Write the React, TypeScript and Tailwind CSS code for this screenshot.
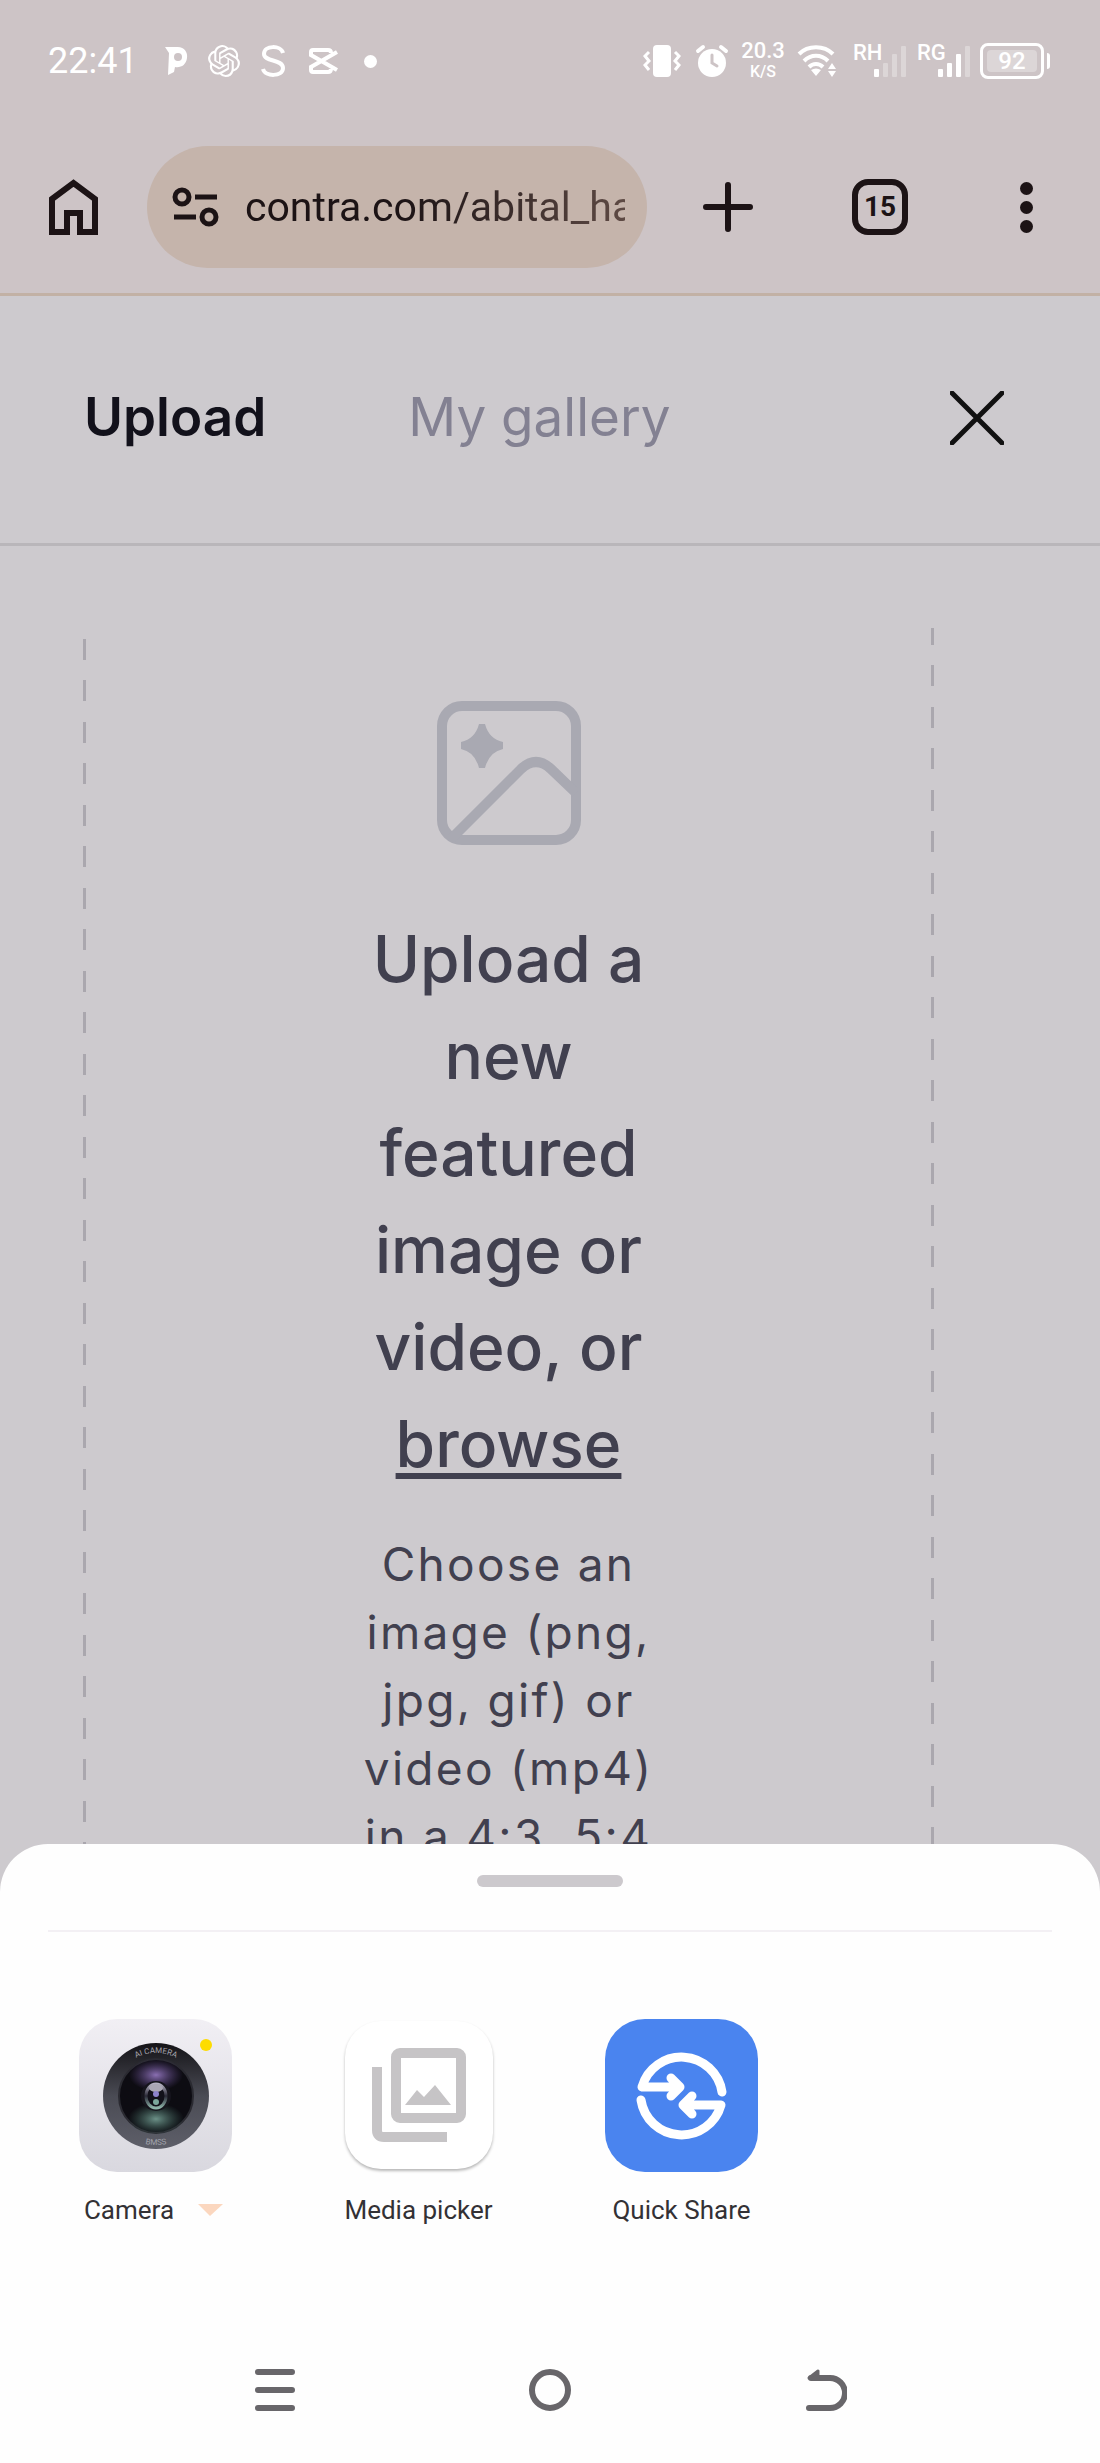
import type { ReactNode } from "react";
import { SiOpenai } from "react-icons/si";

const DASHES =
  "w-[3px] bg-[repeating-linear-gradient(to_bottom,#aaa7ae_0,#aaa7ae_21px,transparent_21px,transparent_41px,#aaa7ae_41px,#aaa7ae_62px,transparent_62px,transparent_83px)]";

function SignalBars({ label, on, className }: { label: string; on: number; className: string }) {
  return (
    <div className={`relative h-8 w-14 ${className}`}>
      <span className="absolute left-0 top-0 text-[22px] leading-4 font-medium">{label}</span>
      <svg viewBox="0 0 56 32" className="h-8 w-14" fill="#fff">
        <rect x="21" y="24" width="5" height="8" rx="1" />
        <rect x="30" y="18" width="5" height="14" rx="1" opacity={on > 1 ? 1 : 0.3} />
        <rect x="39" y="9" width="5" height="23" rx="1" opacity={on > 2 ? 1 : 0.3} />
        <rect x="48" y="1" width="5" height="31" rx="1" opacity="0.3" />
      </svg>
    </div>
  );
}

function StatusBar() {
  return (
    <div className="flex h-[122px] items-center pl-12 pr-[50px] text-white">
      <span className="w-[116px] text-[36px] leading-10">22:41</span>
      <svg viewBox="0 0 24 30" className="mr-5 h-[30px] w-6" aria-label="Payments">
        <path d="M1 1 L12 1 C20 0 24 6 23 12 C22 19 17 22 11 21 L10 26 L4 29 L5 7 Z" fill="#fff" />
        <circle cx="14" cy="11" r="4" fill="#cdc4c6" />
      </svg>
      <SiOpenai aria-label="Assistant" className="mr-5 size-8" />
      <svg viewBox="0 0 26 32" className="mr-5 h-8 w-[26px]" fill="none" stroke="#fff" strokeWidth="4" aria-label="S app">
        <path d="M23 8 C21 0 4 0 4 9 C4 17 23 14 23 23 C23 32 5 32 3 24" />
      </svg>
      <svg viewBox="0 0 32 28" className="mr-[26px] h-7 w-8" fill="none" stroke="#fff" strokeWidth="4" aria-label="Video editor">
        <path d="M31 5 L5 20 V23 Q5 25 7 25 H22 Q25 25 25 22 M31 23 L5 8 V5 Q5 3 7 3 H22 Q25 3 25 6" />
      </svg>
      <span className="size-[13px] rounded-full bg-white" />
      <div className="ml-auto flex items-center">
        <svg viewBox="0 0 38 32" className="mr-[14px] h-8 w-[38px]" aria-label="Vibrate">
          <rect x="10" y="0" width="18" height="32" rx="4" fill="#fff" />
          <path d="M6 7 L2 11 L6 16 L2 20 L6 25 M32 7 L36 11 L32 16 L36 20 L32 25" fill="none" stroke="#fff" strokeWidth="3" />
        </svg>
        <svg viewBox="0 0 34 34" className="mr-3 size-[34px]" fill="none" stroke="#fff" strokeLinecap="round" aria-label="Alarm">
          <circle cx="17" cy="19" r="14" fill="#fff" stroke="none" />
          <path d="M3 7 L8 3 M31 7 L26 3" strokeWidth="4" />
          <path d="M17 11 V19 L22 22" stroke="#cdc4c6" strokeWidth="3" />
        </svg>
        <div className="mr-3 w-11 text-center font-medium">
          <div className="text-[22px] leading-[22px]">20.3</div>
          <div className="text-base leading-5">K/S</div>
        </div>
        <svg viewBox="0 0 40 32" className="mr-4 h-8 w-10" fill="none" stroke="#fff" strokeWidth="4" aria-label="Wi-Fi">
          <path d="M2 9 C11 0 27 0 36 9 M7 16 C14 9 24 9 31 16 M12 22 C16 18 22 18 26 22" />
          <path d="M14 25 Q19 22 24 25 L19 31 Z M35 18 l4 6 h-8 z M35 32 l4 -6 h-8 z" fill="#fff" stroke="none" />
        </svg>
        <SignalBars label="RH" on={1} className="mr-2" />
        <SignalBars label="RG" on={3} className="mr-[7px]" />
        <div className="flex h-9 w-16 rounded-lg border-3 border-white p-1">
          <div className="flex flex-1 items-center justify-center rounded-sm bg-white/30 text-2xl leading-6 font-medium">92</div>
        </div>
        <span className="ml-[3px] h-4 w-[3px] rounded-r-sm bg-white" />
      </div>
    </div>
  );
}

function BrowserBar() {
  return (
    <div className="flex h-[171px] items-start pt-6 pl-12 text-[#1c1315]">
      <button type="button" aria-label="Home" className="mr-12 flex h-[122px] items-center">
        <svg viewBox="0 0 51 58" className="h-[58px] w-[51px]" fill="none" stroke="currentColor" strokeWidth="6">
          <path d="M4 21 L25.500 5 L47 21 V54 H32 V35 H19 V54 H4 Z" />
        </svg>
      </button>
      <div className="flex h-[122px] flex-1 items-center rounded-full bg-[#c5b4ab] pl-[25px] pr-[22px]">
        <svg viewBox="0 0 48 42" className="mr-[25px] h-[42px] w-12 shrink-0" fill="none" stroke="currentColor" strokeWidth="5" aria-label="Site settings">
          <circle cx="10" cy="11" r="7" />
          <circle cx="37" cy="31" r="7" />
          <path d="M23 11 H45 M2 31 H24" />
        </svg>
        <input
          aria-label="Address"
          readOnly
          value="contra.com/abital_ha"
          className="h-16 w-0 min-w-0 flex-1 bg-linear-to-r from-[#1c1315] from-40% to-[#5e4a44] bg-clip-text text-[41px] text-transparent outline-none"
        />
      </div>
      <div className="flex h-[122px] w-[453px] items-center pl-14">
        <button type="button" aria-label="New tab">
          <svg viewBox="0 0 50 50" className="size-[50px]" stroke="currentColor" strokeWidth="6" strokeLinecap="round">
            <path d="M25 3 V47 M3 25 H47" />
          </svg>
        </button>
        <button type="button" aria-label="Open tabs" className="ml-[99px] flex h-14 w-14 items-center justify-center rounded-2xl border-6 border-current text-[28px] font-bold">
          15
        </button>
        <button type="button" aria-label="Menu" className="ml-28 flex flex-col gap-[6px]">
          <span className="size-[13px] rounded-full bg-current" />
          <span className="size-[13px] rounded-full bg-current" />
          <span className="size-[13px] rounded-full bg-current" />
        </button>
      </div>
    </div>
  );
}

function CameraIcon() {
  return (
    <svg viewBox="0 0 153 153" className="size-[153px]">
      <defs>
        <linearGradient id="body" x1="0" y1="0" x2="0" y2="1">
          <stop offset="0" stopColor="#f1eff4" />
          <stop offset="1" stopColor="#d9d8df" />
        </linearGradient>
        <linearGradient id="ring" x1="0" y1="0" x2="0" y2="1">
          <stop offset="0" stopColor="#141317" />
          <stop offset="0.500" stopColor="#4a4b54" />
          <stop offset="1" stopColor="#5e5f69" />
        </linearGradient>
        <radialGradient id="violet">
          <stop offset="0" stopColor="#8a6fb2" />
          <stop offset="1" stopColor="#5c4585" stopOpacity="0" />
        </radialGradient>
        <radialGradient id="teal">
          <stop offset="0" stopColor="#6c9188" />
          <stop offset="1" stopColor="#3f665c" stopOpacity="0" />
        </radialGradient>
        <linearGradient id="inner" x1="0" y1="0" x2="0" y2="1">
          <stop offset="0" stopColor="#b5b2c2" />
          <stop offset="0.500" stopColor="#2a2937" />
          <stop offset="1" stopColor="#8fb5aa" />
        </linearGradient>
        <path id="top-arc" d="M34 77 A43 43 0 0 1 120 77" />
        <path id="low-arc" d="M28 77 A49 49 0 0 0 126 77" />
      </defs>
      <rect width="153" height="153" rx="38" fill="url(#body)" />
      <circle cx="77" cy="77" r="53" fill="url(#ring)" />
      <circle cx="77" cy="77" r="37" fill="#0d0c12" stroke="#2a2a31" strokeWidth="2" />
      <ellipse cx="77" cy="56" rx="27" ry="16" fill="url(#violet)" />
      <ellipse cx="77" cy="100" rx="28" ry="16" fill="url(#teal)" />
      <circle cx="77" cy="77" r="15" fill="#16151d" />
      <ellipse cx="77" cy="77" rx="10" ry="12" fill="#12111a" stroke="url(#inner)" strokeWidth="3" />
      <ellipse cx="77" cy="69" rx="7" ry="4" fill="#aaa7b4" />
      <circle cx="77" cy="75" r="3" fill="#8d83cc" />
      <circle cx="77" cy="83" r="3" fill="#7ba69b" />
      <text fontSize="8" fill="#a5a3ab" textAnchor="middle">
        <textPath href="#top-arc" startOffset="50%">AI CAMERA</textPath>
      </text>
      <text fontSize="8" fill="#a2a3ad" textAnchor="middle">
        <textPath href="#low-arc" startOffset="50%">BMSS</textPath>
      </text>
      <circle cx="127" cy="26" r="6" fill="#fddc00" />
    </svg>
  );
}

function MediaIcon() {
  return (
    <div className="flex size-[148px] items-center justify-center rounded-[36px] bg-white shadow-[0_2px_3px_rgba(0,0,0,0.28)]">
      <svg viewBox="0 0 96 96" className="size-24" fill="none" stroke="#c6c4c6" strokeWidth="10">
        <rect x="25" y="6" width="65" height="65" rx="4" />
        <path d="M6 20 V83 Q6 90 13 90 H76" />
        <path d="M34 58 L46 43 L53 50 L64 38 L80 58 Z" fill="#c6c4c6" stroke="none" />
      </svg>
    </div>
  );
}

function QuickShareIcon() {
  return (
    <svg viewBox="0 0 153 153" className="size-[153px]">
      <rect width="153" height="153" rx="40" fill="#4a84ef" />
      <g fill="none" stroke="#fff" strokeWidth="9" strokeLinecap="round" strokeLinejoin="round">
        <path d="M117 73 A41 41 0 0 0 37 68 H75 M66 59 L75 68 L66 77" />
        <path d="M36 81 A41 41 0 0 0 116 86 H78 M87 77 L78 86 L87 95" />
      </g>
    </svg>
  );
}

function AppTile({ icon, children }: { icon: ReactNode; children: ReactNode }) {
  return (
    <button type="button" className="flex flex-col items-center">
      <span className="flex h-[154px] items-center">{icon}</span>
      <span className="mt-[18px] flex items-center text-[26px] leading-10 text-[#333135]">{children}</span>
    </button>
  );
}

function ShareSheet() {
  return (
    <section className="relative flex-1 rounded-t-[48px] bg-[#fefefe]">
      <div className="mx-auto w-[146px] pt-[31px]">
        <div className="h-3 rounded-md bg-[#ccc9cd]" />
      </div>
      <div className="mx-12 mt-[43px] h-[2px] bg-[#f3f0f4]" />
      <div className="mx-6 mt-[86px] grid grid-cols-4">
        <AppTile icon={<CameraIcon />}>
          Camera
          <svg viewBox="0 0 25 12" className="mr-1 ml-6 h-3 w-[25px]">
            <path d="M0 0 H25 L12 12 Z" fill="#fbd7bf" />
          </svg>
        </AppTile>
        <AppTile icon={<MediaIcon />}>Media picker</AppTile>
        <AppTile icon={<QuickShareIcon />}>Quick Share</AppTile>
      </div>
      <nav className="mt-[138px] grid grid-cols-3 justify-items-center px-[12.5%] text-[#68666a]">
        <button type="button" aria-label="Recent apps">
          <svg viewBox="0 0 44 44" className="size-11" stroke="currentColor" strokeWidth="6" strokeLinecap="round">
            <path d="M5 4 H39 M5 22 H39 M5 40 H39" />
          </svg>
        </button>
        <button type="button" aria-label="Home screen">
          <svg viewBox="0 0 44 44" className="size-11" fill="none" stroke="currentColor" strokeWidth="6">
            <circle cx="22" cy="22" r="18" />
          </svg>
        </button>
        <button type="button" aria-label="Back">
          <svg viewBox="0 0 44 44" className="size-11" fill="none" stroke="currentColor" strokeWidth="6" strokeLinecap="round">
            <path d="M6 40 H27 A15 15 0 0 0 27 10 H8" />
            <path d="M6 10 L15 3 V10 Z" fill="currentColor" strokeWidth="3" strokeLinejoin="round" />
          </svg>
        </button>
      </nav>
    </section>
  );
}

export default function App() {
  return (
    <div className="flex min-h-screen flex-col bg-[#cdcace] font-['Roboto',sans-serif]">
      <header className="border-b-3 border-[#c2b1a5] bg-[#cdc4c6]">
        <StatusBar />
        <BrowserBar />
      </header>
      <main className="-mb-12 flex h-[1596px] flex-col overflow-hidden font-['Inter',sans-serif]">
        <div className="flex h-[250px] items-center border-b-3 border-[#b9b6ba] pb-1 pl-[84px] pr-24 text-[53px]">
          <button type="button" className="font-semibold text-[#12111b]">Upload</button>
          <button type="button" className="ml-[142px] text-[#838192]">My gallery</button>
          <button type="button" aria-label="Close" className="ml-auto">
            <svg viewBox="0 0 54 54" className="size-[54px]" stroke="#111" strokeWidth="5" strokeLinecap="round">
              <path d="M2 2 L52 52 M52 2 L2 52" />
            </svg>
          </button>
        </div>
        <div className="mr-[166px] ml-[83px] flex flex-1 justify-between text-[#41404f]">
          <div className={`mt-[93px] ${DASHES}`} />
          <div className="flex w-[300px] flex-col items-center pt-[155px] text-center">
            <svg viewBox="0 0 144 144" className="size-36" fill="none" stroke="#a9a9b2" strokeWidth="10">
              <rect x="5" y="5" width="134" height="134" rx="20" />
              <path d="M15 137 L84 68 Q99 54 114 68 L139 92" />
              <path d="M42 23 H48 Q52 38 66 41 V48 Q52 51 48 67 H42 Q38 51 24 48 V41 Q38 38 42 23 Z" fill="#a9a9b2" stroke="none" />
            </svg>
            <p className="mt-[65px] text-[64px] leading-[97px] font-medium">
              Upload a new featured image or video, or{" "}
              <a href="#browse" className="underline decoration-6 underline-offset-6">browse</a>
            </p>
            <p className="mt-[38px] text-[46px] leading-[68px] tracking-wider">
              Choose an image (png, jpg, gif) or video (mp4) in a 4:3, 5:4
            </p>
          </div>
          <div className={`mt-[82px] bg-position-[0_-4px] ${DASHES}`} />
        </div>
      </main>
      <ShareSheet />
    </div>
  );
}
